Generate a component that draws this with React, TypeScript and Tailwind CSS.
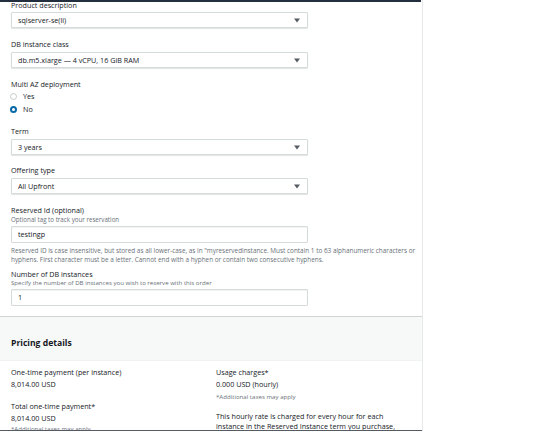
import React from "react";

const Caret = () => (
  <svg width="6" height="5" viewBox="0 0 6 5" className="shrink-0">
    <path d="M0 0.5h6L3 4.5z" fill="#545b64" />
  </svg>
);

function Select({ value, className = "" }: { value: string; className?: string }) {
  return (
    <div
      className={`flex h-[16px] w-[297px] items-center justify-between rounded-[1px] border border-[#d5dbdb] bg-white pl-[6px] pr-[7px] text-[7.2px] text-[#16191f] shadow-[0_1px_1px_rgba(0,28,36,0.12)] ${className}`}
    >
      <span>{value}</span>
      <Caret />
    </div>
  );
}

function Input({ value, className = "" }: { value: string; className?: string }) {
  return (
    <div
      className={`flex h-[17px] w-[297px] items-center rounded-[1px] border border-[#d5dbdb] bg-white pl-[6px] text-[7.2px] text-[#16191f] shadow-[inset_0_1px_1px_rgba(0,28,36,0.06)] ${className}`}
    >
      {value}
    </div>
  );
}

const Label = ({ children, className = "" }: { children: React.ReactNode; className?: string }) => (
  <div className={`text-[7.2px] leading-[14px] text-[#16191f] ${className}`}>{children}</div>
);

function Radio({ label, checked }: { label: string; checked?: boolean }) {
  return (
    <div className="flex h-[13px] items-center">
      <span
        className={
          checked
            ? "ml-[-1px] h-[7px] w-[7px] rounded-full border-[2px] border-[#0a6aa8] bg-white"
            : "ml-[-1px] h-[7px] w-[7px] rounded-full border border-[#c4cccc] bg-white"
        }
      />
      <span className="ml-[6px] text-[7.2px] text-[#16191f]">{label}</span>
    </div>
  );
}

export default function App() {
  return (
    <div className="relative h-[431px] w-[540px] overflow-hidden bg-white font-['Open_Sans',sans-serif]">
      {/* top nav edge peeking in */}
      <div className="absolute left-0 top-0 z-10 h-[2px] w-[421px] bg-[#232f3e]" />

      <div className="flex h-full w-[423px] flex-col border-r border-[#e6e9e9]">
        <section className="flex flex-col border-b border-[#cfd5d5] px-[11px] pb-[10px]">
          <Label className="mt-[-2px]">Product description</Label>
          <Select value="sqlserver-se(li)" />

          <Label className="mt-[9px]">DB instance class</Label>
          <Select value="db.m5.xlarge — 4 vCPU, 16 GiB RAM" className="mt-[1px]" />

          <Label className="mt-[9px]">Multi AZ deployment</Label>
          <div className="mt-[-1px] flex flex-col">
            <Radio label="Yes" />
            <Radio label="No" checked />
          </div>

          <Label className="mt-[8px]">Term</Label>
          <Select value="3 years" className="mt-[1px]" />

          <Label className="mt-[8px]">Offering type</Label>
          <Select value="All Upfront" className="mt-[1px]" />

          <div className="mt-[10px] text-[7.2px] leading-[12px] text-[#16191f]">Reserved Id (optional)</div>
          <div className="mt-[-1px] text-[6.2px] leading-[9px] text-[#687078]">
            Optional tag to track your reservation
          </div>
          <Input value="testingp" className="mt-[2px]" />
          <p className="mt-[3px] whitespace-nowrap text-[6.4px] leading-[9px] text-[#687078]">
            Reserved ID is case insensitive, but stored as all lower-case, as in "myreservedinstance. Must contain 1 to 63
            alphanumeric characters or
            <br />
            hyphens. First character must be a letter. Cannot end with a hyphen or contain two consecutive hyphens.
          </p>

          <div className="mt-[4px] text-[7.2px] leading-[12px] text-[#16191f]">Number of DB instances</div>
          <div className="mt-[-2px] text-[6.1px] leading-[9px] text-[#687078]">
            Specify the number of DB instances you wish to reserve with this order
          </div>
          <Input value="1" className="mt-[2px]" />
        </section>

        <section className="flex min-h-0 flex-1 flex-col">
          <div className="h-[44px] border-b border-[#f0f1f1] bg-[#f7f8f8] px-[11px] pt-[20px]">
            <h2 className="text-[8.6px] font-bold leading-[12px] text-[#16191f]">Pricing details</h2>
          </div>
          <div className="grid min-h-0 flex-1 grid-cols-[205px_1fr] overflow-hidden px-[11px] pt-[5px] text-[7.2px] text-[#16191f]">
            <div className="flex flex-col">
              <div className="leading-[12px]">One-time payment (per instance)</div>
              <div className="leading-[12px]">8,014.00 USD</div>
              <div className="mt-[10px] leading-[12px]">Total one-time payment*</div>
              <div className="leading-[12px]">8,014.00 USD</div>
              <div className="mt-[1px] text-[6.1px] leading-[8px] text-[#687078]">*Additional taxes may apply</div>
            </div>
            <div className="flex flex-col">
              <div className="leading-[12px]">Usage charges*</div>
              <div className="leading-[12px]">0.000 USD (hourly)</div>
              <div className="mt-[3px] text-[6.1px] leading-[8px] text-[#687078]">*Additional taxes may apply</div>
              <p className="mt-[10px] leading-[10px]">
                This hourly rate is charged for every hour for each
                <br />
                instance in the Reserved Instance term you purchase,
                <br />
                regardless of whether the instance is running.
              </p>
            </div>
          </div>
          <div className="h-[1px] shrink-0 bg-[#545b64]" />
        </section>
      </div>
    </div>
  );
}
